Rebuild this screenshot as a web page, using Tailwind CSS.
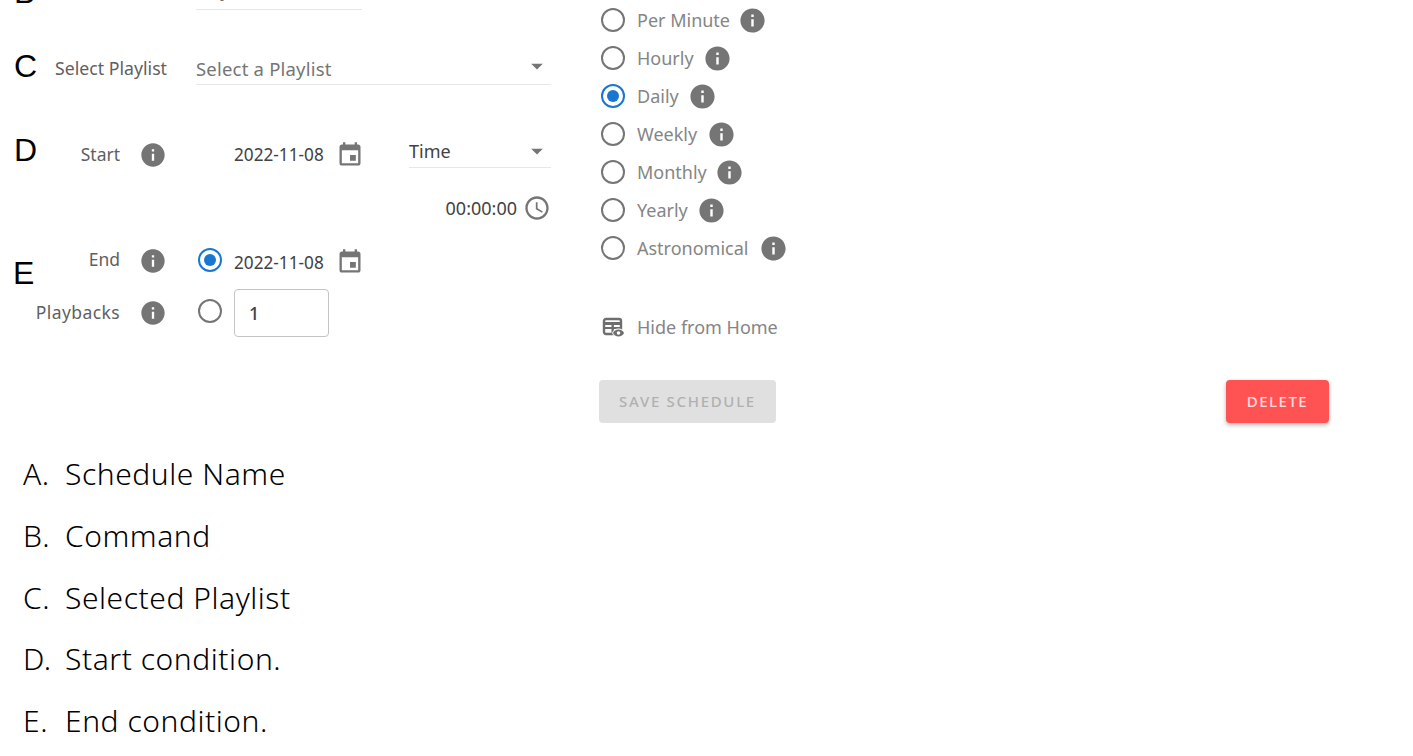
<!DOCTYPE html>
<html lang="en">
<head>
    <meta charset="UTF-8">
    <title>Schedule</title>
    <script src="https://cdn.jsdelivr.net/npm/@tailwindcss/browser@4"></script>
</head>
<body class="bg-white font-['Noto_Sans',sans-serif] overflow-hidden">
    <div class="relative h-[756px] w-[1413px] overflow-hidden">

        <!-- Annotation letters -->
        <span class="absolute left-[14px] top-[-26px] font-['Liberation_Sans'] text-[32px] leading-[36px] text-black">B</span>
        <span class="absolute left-[14px] top-[48px] font-['Liberation_Sans'] text-[32px] leading-[36px] text-black">C</span>
        <span class="absolute left-[14px] top-[132px] font-['Liberation_Sans'] text-[32px] leading-[36px] text-black">D</span>
        <span class="absolute left-[13px] top-[255px] font-['Liberation_Sans'] text-[32px] leading-[36px] text-black">E</span>

        <div class="flex h-[440px]">
            <!-- Left column -->
            <div class="w-[599px] shrink-0 flex flex-col text-[#5f5f5f]">
                <div class="flex h-[20px] mt-[-10px] items-end">
                    <span class="w-[167px] text-right text-[17.5px] leading-[20px] mb-[8px]">Command</span>
                    <div class="ml-[29px] w-[166px] border-b border-[#e5e8ea] text-[17px] leading-[20px] pb-[8px] text-[#757575]">Play</div>
                </div>

                <div class="flex mt-[34px] h-[41px]">
                    <span class="w-[167px] text-right text-[17.7px] leading-[24px] mt-[12px] whitespace-nowrap">Select Playlist</span>
                    <div class="ml-[29px] w-[355px] flex items-end justify-between border-b border-[#e5e8ea]">
                        <span class="text-[18.5px] tracking-[0.2px] leading-[24px] pb-[3px] text-[#757575]">Select a Playlist</span>
                        <svg class="w-[28px] h-[28px] mb-[4px] fill-[#757575]" viewBox="0 0 24 24"><path d="M7 10l5 5 5-5z"/></svg>
                    </div>
                </div>

                <div class="flex items-center mt-[49px] h-[40px]">
                    <span class="w-[120px] text-right text-[17.5px]">Start</span>
                    <svg class="ml-[19px] mt-[2px] w-[28px] h-[28px] fill-[#757575]" viewBox="0 0 24 24"><path d="M12 2C6.48 2 2 6.48 2 12s4.48 10 10 10 10-4.48 10-10S17.52 2 12 2zm1 15h-2v-6h2v6zm0-8h-2V7h2v2z"/></svg>
                    <span class="ml-[67px] mt-[2px] w-[90px] text-[17.2px] whitespace-nowrap text-[#424242]">2022-11-08</span>
                    <svg class="ml-[12px] mt-[1px] w-[28px] h-[28px] fill-[#757575]" viewBox="0 0 24 24"><path d="M17 12h-5v5h5v-5zM16 1v2H8V1H6v2H5c-1.11 0-1.99.9-1.99 2L3 19c0 1.1.89 2 2 2h14c1.1 0 2-.9 2-2V5c0-1.1-.9-2-2-2h-1V1h-2zm3 18H5V8h14v11z"/></svg>
                    <div class="ml-[45px] self-start w-[142px] h-[34px] flex items-center justify-between border-b border-[#e5e8ea]">
                        <span class="text-[18px] mt-[2px] text-[#424242]">Time</span>
                        <svg class="w-[28px] h-[28px] fill-[#757575]" viewBox="0 0 24 24"><path d="M7 10l5 5 5-5z"/></svg>
                    </div>
                </div>

                <div class="flex items-center justify-end w-[551px] mt-[20px] h-[28px]">
                    <span class="text-[18px] text-[#424242]">00:00:00</span>
                    <svg class="ml-[6px] w-[28px] h-[28px] fill-[#757575]" viewBox="0 0 24 24"><path d="M11.99 2C6.47 2 2 6.48 2 12s4.47 10 9.99 10C17.52 22 22 17.52 22 12S17.52 2 11.99 2zM12 20c-4.42 0-8-3.58-8-8s3.58-8 8-8 8 3.58 8 8-3.58 8-8 8zm.5-13H11v6l5.25 3.15.75-1.23-4.5-2.67z"/></svg>
                </div>

                <div class="flex items-center mt-[25px] h-[28px]">
                    <span class="w-[120px] text-right text-[17.5px] mt-[-4px]">End</span>
                    <svg class="ml-[19px] w-[28px] h-[28px] fill-[#757575]" viewBox="0 0 24 24"><path d="M12 2C6.48 2 2 6.48 2 12s4.48 10 10 10 10-4.48 10-10S17.52 2 12 2zm1 15h-2v-6h2v6zm0-8h-2V7h2v2z"/></svg>
                    <span class="ml-[31px] w-[24px] h-[24px] rounded-full border-[2.5px] border-[#1976d2] flex items-center justify-center mt-[-3px]"><span class="w-[12px] h-[12px] rounded-full bg-[#1976d2]"></span></span>
                    <span class="ml-[12px] mt-[4px] w-[90px] text-[17.2px] whitespace-nowrap text-[#424242]">2022-11-08</span>
                    <svg class="ml-[12px] mt-[2px] w-[28px] h-[28px] fill-[#757575]" viewBox="0 0 24 24"><path d="M17 12h-5v5h5v-5zM16 1v2H8V1H6v2H5c-1.11 0-1.99.9-1.99 2L3 19c0 1.1.89 2 2 2h14c1.1 0 2-.9 2-2V5c0-1.1-.9-2-2-2h-1V1h-2zm3 18H5V8h14v11z"/></svg>
                </div>

                <div class="flex items-center mt-[14px] h-[48px]">
                    <span class="w-[120px] text-right text-[17.5px] tracking-[0.4px] mt-[-2px]">Playbacks</span>
                    <svg class="ml-[19px] w-[28px] h-[28px] fill-[#757575]" viewBox="0 0 24 24"><path d="M12 2C6.48 2 2 6.48 2 12s4.48 10 10 10 10-4.48 10-10S17.52 2 12 2zm1 15h-2v-6h2v6zm0-8h-2V7h2v2z"/></svg>
                    <span class="ml-[31px] mt-[-4px] w-[24px] h-[24px] rounded-full border-[2.5px] border-[#757575]"></span>
                    <div class="ml-[12px] w-[95px] h-[48px] rounded-[4px] border border-[#c4c4c4] flex items-center pl-[14px] text-[18px] font-medium text-[#424242]">1</div>
                </div>
            </div>

            <!-- Right column -->
            <div class="flex-1 flex flex-col pr-[84px] text-[18px] text-[#858585]">
                <div class="flex flex-col gap-[14px] mt-[8px] ml-[2px]">
                    <div class="flex items-center h-[24px]"><span class="w-[24px] h-[24px] rounded-full border-[2.5px] border-[#757575]"></span><span class="ml-[12px]">Per Minute</span><svg class="ml-[8px] w-[29px] h-[29px] fill-[#757575]" viewBox="0 0 24 24"><path d="M12 2C6.48 2 2 6.48 2 12s4.48 10 10 10 10-4.48 10-10S17.52 2 12 2zm1 15h-2v-6h2v6zm0-8h-2V7h2v2z"/></svg></div>
                    <div class="flex items-center h-[24px]"><span class="w-[24px] h-[24px] rounded-full border-[2.5px] border-[#757575]"></span><span class="ml-[12px]">Hourly</span><svg class="ml-[9px] w-[29px] h-[29px] fill-[#757575]" viewBox="0 0 24 24"><path d="M12 2C6.48 2 2 6.48 2 12s4.48 10 10 10 10-4.48 10-10S17.52 2 12 2zm1 15h-2v-6h2v6zm0-8h-2V7h2v2z"/></svg></div>
                    <div class="flex items-center h-[24px]"><span class="w-[24px] h-[24px] rounded-full border-[2.5px] border-[#1976d2] flex items-center justify-center"><span class="w-[12px] h-[12px] rounded-full bg-[#1976d2]"></span></span><span class="ml-[12px]">Daily</span><svg class="ml-[9px] w-[29px] h-[29px] fill-[#757575]" viewBox="0 0 24 24"><path d="M12 2C6.48 2 2 6.48 2 12s4.48 10 10 10 10-4.48 10-10S17.52 2 12 2zm1 15h-2v-6h2v6zm0-8h-2V7h2v2z"/></svg></div>
                    <div class="flex items-center h-[24px]"><span class="w-[24px] h-[24px] rounded-full border-[2.5px] border-[#757575]"></span><span class="ml-[12px]">Weekly</span><svg class="ml-[10px] w-[29px] h-[29px] fill-[#757575]" viewBox="0 0 24 24"><path d="M12 2C6.48 2 2 6.48 2 12s4.48 10 10 10 10-4.48 10-10S17.52 2 12 2zm1 15h-2v-6h2v6zm0-8h-2V7h2v2z"/></svg></div>
                    <div class="flex items-center h-[24px]"><span class="w-[24px] h-[24px] rounded-full border-[2.5px] border-[#757575]"></span><span class="ml-[12px]">Monthly</span><svg class="ml-[8px] w-[29px] h-[29px] fill-[#757575]" viewBox="0 0 24 24"><path d="M12 2C6.48 2 2 6.48 2 12s4.48 10 10 10 10-4.48 10-10S17.52 2 12 2zm1 15h-2v-6h2v6zm0-8h-2V7h2v2z"/></svg></div>
                    <div class="flex items-center h-[24px]"><span class="w-[24px] h-[24px] rounded-full border-[2.5px] border-[#757575]"></span><span class="ml-[12px]">Yearly</span><svg class="ml-[9px] w-[29px] h-[29px] fill-[#757575]" viewBox="0 0 24 24"><path d="M12 2C6.48 2 2 6.48 2 12s4.48 10 10 10 10-4.48 10-10S17.52 2 12 2zm1 15h-2v-6h2v6zm0-8h-2V7h2v2z"/></svg></div>
                    <div class="flex items-center h-[24px]"><span class="w-[24px] h-[24px] rounded-full border-[2.5px] border-[#757575]"></span><span class="ml-[12px]">Astronomical</span><svg class="ml-[11px] w-[29px] h-[29px] fill-[#757575]" viewBox="0 0 24 24"><path d="M12 2C6.48 2 2 6.48 2 12s4.48 10 10 10 10-4.48 10-10S17.52 2 12 2zm1 15h-2v-6h2v6zm0-8h-2V7h2v2z"/></svg></div>
                </div>

                <div class="flex items-center mt-[53px] ml-[2px] h-[28px]">
                    <svg class="w-[24px] h-[24px]" viewBox="0 0 24 24">
                        <rect x="3" y="4" width="17" height="15" rx="2" fill="none" stroke="#6e6e6e" stroke-width="2.4"/>
                        <path d="M3 7h17v3H3zM3 12h17v2H3zM10.500 8h2.400v11h-2.400z" fill="#6e6e6e"/>
                        <path d="M17.500 13.500c-3 0-5.500 1.800-6.500 4.500 1 2.700 3.500 4.500 6.500 4.500s5.500-1.800 6.500-4.500c-1-2.700-3.500-4.500-6.500-4.500z" fill="#fff"/>
                        <path d="M17.500 14.500c-2.500 0-4.700 1.400-5.500 3.500.8 2.100 3 3.500 5.500 3.500s4.700-1.400 5.500-3.500c-.8-2.100-3-3.500-5.500-3.500zm0 5.300a1.800 1.800 0 1 1 0-3.600 1.800 1.800 0 0 1 0 3.600z" fill="#6e6e6e"/>
                    </svg>
                    <span class="ml-[12px]">Hide from Home</span>
                </div>

                <div class="flex justify-between mt-[39px]">
                    <button class="w-[177px] h-[43px] rounded-[4px] bg-[#e0e0e0] text-[#b0b0b0] text-[15px] tracking-[1.7px] font-medium">SAVE SCHEDULE</button>
                    <button class="w-[103px] h-[43px] rounded-[4px] bg-[#ff5252] text-white/80 text-[15px] tracking-[1.5px] font-medium shadow-[0_2px_4px_rgba(0,0,0,0.3)]">DELETE</button>
                </div>
            </div>
        </div>

        <!-- Legend -->
        <ol class="mt-[3px] flex flex-col text-[30px] leading-[61.75px] font-light text-black tracking-[0.55px]">
            <li class="flex pl-[23px]"><span class="w-[42px]">A.</span>Schedule Name</li>
            <li class="flex pl-[23px]"><span class="w-[42px]">B.</span>Command</li>
            <li class="flex pl-[23px]"><span class="w-[42px]">C.</span>Selected Playlist</li>
            <li class="flex pl-[23px]"><span class="w-[42px]">D.</span>Start condition.</li>
            <li class="flex pl-[23px]"><span class="w-[42px]">E.</span>End condition.</li>
        </ol>
    </div>
</body>
</html>
